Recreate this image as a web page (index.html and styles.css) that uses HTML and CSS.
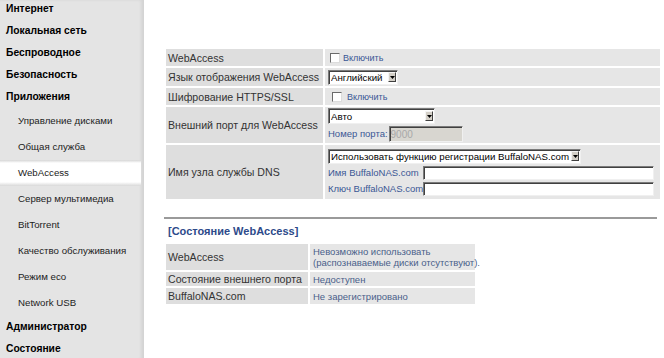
FILE: index.html
```html
<!DOCTYPE html>
<html lang="ru">
<head>
  <meta charset="UTF-8">
  <title>WebAccess</title>
  <link rel="stylesheet" href="styles.css">
</head>
<body>

<div class="page">
  <nav class="side">
    <ul class="menu">
      <li class="top">Интернет</li>
      <li class="top">Локальная сеть</li>
      <li class="top">Беспроводное</li>
      <li class="top">Безопасность</li>
      <li class="top">Приложения</li>
      <li class="sub">Управление дисками</li>
      <li class="sub">Общая служба</li>
      <li class="sub active">WebAccess</li>
      <li class="sub">Сервер мультимедиа</li>
      <li class="sub">BitTorrent</li>
      <li class="sub">Качество обслуживания</li>
      <li class="sub">Режим eco</li>
      <li class="sub">Network USB</li>
      <li class="top">Администратор</li>
      <li class="top">Состояние</li>
    </ul>
  </nav>

  <main class="content">
    <table class="settings">
      <tr class="row-check">
        <th>WebAccess</th>
        <td><label class="check"><input type="checkbox"> Включить</label></td>
      </tr>
      <tr class="row-lang">
        <th>Язык отображения WebAccess</th>
        <td>
          <span class="combo combo-lang">
            <select><option>Английский</option></select>
            <span class="arrow"><svg width="5" height="3" viewBox="0 0 5 3"><path d="M0 0h5L2.5 3z" fill="#000"/></svg></span>
          </span>
        </td>
      </tr>
      <tr class="row-check">
        <th>Шифрование HTTPS/SSL</th>
        <td><label class="check check-ssl"><input type="checkbox"> Включить</label></td>
      </tr>
      <tr class="row-port">
        <th>Внешний порт для WebAccess</th>
        <td>
          <span class="combo combo-port">
            <select><option>Авто</option></select>
            <span class="arrow"><svg width="5" height="3" viewBox="0 0 5 3"><path d="M0 0h5L2.5 3z" fill="#000"/></svg></span>
          </span>
          <div class="field">
            <span class="hint">Номер порта:</span>
            <input type="text" class="port-input" value="9000" disabled>
          </div>
        </td>
      </tr>
      <tr class="row-dns">
        <th>Имя узла службы DNS</th>
        <td>
          <span class="combo combo-dns">
            <select><option>Использовать функцию регистрации BuffaloNAS.com</option></select>
            <span class="arrow"><svg width="5" height="3" viewBox="0 0 5 3"><path d="M0 0h5L2.5 3z" fill="#000"/></svg></span>
          </span>
          <div class="field">
            <span class="hint hint-wide">Имя BuffaloNAS.com</span>
            <input type="text" class="text-input">
          </div>
          <div class="field">
            <span class="hint hint-wide">Ключ BuffaloNAS.com</span>
            <input type="text" class="text-input">
          </div>
        </td>
      </tr>
    </table>

    <hr class="divider">

    <h3 class="section-title">[Состояние WebAccess]</h3>

    <table class="status">
      <tr class="row-tall">
        <th>WebAccess</th>
        <td>Невозможно использовать<br>(распознаваемые диски отсутствуют).</td>
      </tr>
      <tr class="row-short">
        <th>Состояние внешнего порта</th>
        <td>Недоступен</td>
      </tr>
      <tr class="row-mid">
        <th>BuffaloNAS.com</th>
        <td>Не зарегистрировано</td>
      </tr>
    </table>
  </main>
</div>

</body>
</html>
```

FILE: styles.css
```css
body {
  margin: 0;
  background-color: #ffffff;
  font-family: 'Liberation Sans', Arial, sans-serif;
  color: #333333;
}
.page {
  display: flex;
  min-height: 358px;
}
.side {
  width: 144px;
  flex-shrink: 0;
  background-color: #e4e4e4;
  box-shadow: inset -3px 0 3px rgba(0, 0, 0, 0.07);
  overflow: hidden;
}
.menu {
  list-style: none;
  margin: -2px 0 0 0;
  padding: 0;
}
.menu li {
  color: #000000;
  white-space: nowrap;
}
.menu .top {
  height: 22px;
  line-height: 22px;
  padding-left: 6px;
  font-weight: bold;
  font-size: 10.3px;
}
.menu .sub {
  height: 26px;
  line-height: 26px;
  padding-left: 18px;
  font-size: 9.7px;
  color: #222222;
}
.menu .active {
  background: linear-gradient(#d6d6d6, #ffffff 3px, #ffffff 22px, #d8d8d8);
  margin-right: 3px;
}
.content {
  padding: 47px 0 0 20px;
  flex: 1;
}
table {
  border-collapse: separate;
  border-spacing: 2px;
  table-layout: fixed;
}
th {
  text-align: left;
  font-weight: normal;
  font-size: 10.6px;
  line-height: 12px;
  color: #333333;
  background-color: #dedede;
  padding: 0 2px;
  white-space: nowrap;
}
td {
  background-color: #e6e6e6;
  padding: 0 3px;
  vertical-align: middle;
  white-space: nowrap;
  font-size: 9px;
  line-height: 10px;
}
.settings {
  width: 498px;
}
.settings th {
  width: 153px;
}
.row-check {
  height: 17px;
}
.row-lang {
  height: 18px;
}
.row-port {
  height: 36px;
}
.row-dns {
  height: 54px;
}
.check {
  display: flex;
  align-items: center;
  font-size: 9px;
  color: #3a5795;
  padding-left: 2px;
}
.check-ssl {
  padding-left: 4px;
}
.check input {
  appearance: none;
  width: 10px;
  height: 10px;
  margin: 0 3px 0 0;
  background: #ffffff;
  border: 1px solid;
  border-color: #6a6a6a #dcdcdc #dcdcdc #6a6a6a;
}
.check-ssl input {
  margin-right: 5px;
}
.combo {
  display: inline-flex;
  align-items: center;
  height: 13px;
  background: #ffffff;
  border: 1px solid;
  border-color: #7a7a7a #f0f0f0 #f0f0f0 #7a7a7a;
  box-shadow: inset 1px 1px 0 #404040;
  vertical-align: middle;
}
.combo select {
  appearance: none;
  border: none;
  background: transparent;
  font-family: 'Liberation Sans', Arial, sans-serif;
  font-size: 9.7px;
  color: #000000;
  padding: 0 0 0 2px;
  margin: 0;
  height: 13px;
  line-height: 13px;
  flex: 1;
  width: 0;
  min-width: 0;
}
.arrow {
  display: flex;
  align-items: center;
  justify-content: center;
  width: 6px;
  height: 8px;
  margin-right: 1px;
  background: #d4d0c8;
  border: 1px solid;
  border-color: #f4f4f4 #404040 #404040 #f4f4f4;
}
.combo-lang {
  width: 68px;
}
.combo-port {
  width: 105px;
  height: 14px;
}
.combo-port select {
  height: 14px;
}
.combo-dns {
  width: 251px;
  height: 13px;
}
.field {
  display: flex;
  align-items: center;
  margin-top: 2px;
}
.hint {
  font-size: 9.5px;
  color: #3a5795;
  margin-right: 1px;
  white-space: nowrap;
}
.hint-wide {
  width: 94px;
}
.port-input {
  width: 70px;
  height: 14px;
  padding: 0 1px;
  font-family: 'Liberation Sans', Arial, sans-serif;
  font-size: 10px;
  color: #a8a8a8;
  background: #d8d6d0;
  border: 1px solid;
  border-color: #7a7a7a #f0f0f0 #f0f0f0 #7a7a7a;
  box-shadow: inset 1px 1px 0 #404040;
}
.text-input {
  width: 227px;
  height: 12px;
  padding: 0 1px;
  background: #ffffff;
  border: 1px solid;
  border-color: #7a7a7a #f0f0f0 #f0f0f0 #7a7a7a;
  box-shadow: inset 1px 1px 0 #404040;
}
.divider {
  width: 493px;
  margin: 16px 0 0 0;
  border: none;
  border-top: 2px solid #9a9a9a;
}
.section-title {
  margin: 5px 0 0 4px;
  font-size: 11px;
  font-weight: bold;
  color: #2d4a8a;
  line-height: 14px;
}
.status {
  width: 313px;
  margin-top: 4px;
}
.status th {
  width: 138px;
}
.status td {
  font-size: 9.5px;
  color: #4a5f8a;
  line-height: 11px;
}
.status .row-tall {
  height: 26px;
}
.status .row-short {
  height: 14px;
}
.status .row-mid {
  height: 16px;
}
```
